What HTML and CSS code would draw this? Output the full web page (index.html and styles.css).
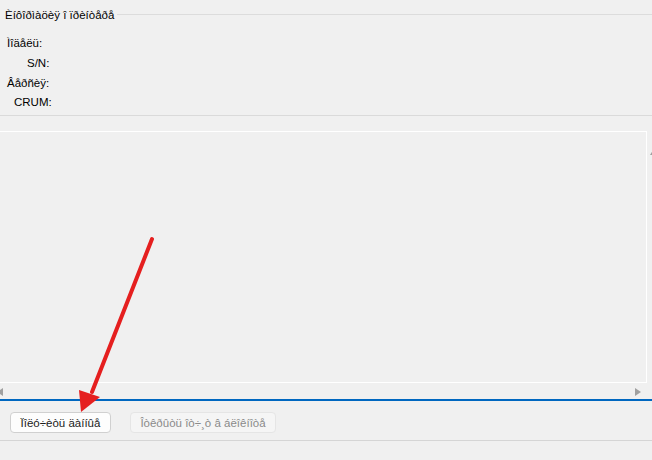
FILE: index.html
```html
<!DOCTYPE html>
<html lang="en">
<head>
    <meta charset="UTF-8">
    <meta name="viewport" content="width=device-width, initial-scale=1.0">
    <title>Printer Info</title>
    <link rel="stylesheet" href="styles.css">
</head>
<body>
    <div class="window">
        <div class="group-title">
            <span>Èíôîðìàöèÿ î ïðèíòåðå</span>
            <div class="group-line"></div>
        </div>
        <div class="info">
            <div class="info-row model">Ìîäåëü:</div>
            <div class="info-row sn">S/N:</div>
            <div class="info-row version">Âåðñèÿ:</div>
            <div class="info-row crum">CRUM:</div>
        </div>
        <div class="separator"></div>
        <div class="log">
            <div class="log-body"></div>
            <div class="vscroll"><span class="arrow-up"></span></div>
            <div class="hscroll">
                <span class="arrow-left"></span>
                <span class="arrow-right"></span>
            </div>
        </div>
        <div class="accent-line"></div>
        <div class="actions">
            <button class="btn btn-get">Ïîëó÷èòü äàííûå</button>
            <button class="btn btn-open" disabled>Îòêðûòü îò÷¸ò â áëîêíîòå</button>
        </div>
        <div class="bottom-line"></div>
    </div>
    <svg class="pointer" width="652" height="460" viewBox="0 0 652 460">
        <line x1="152" y1="239" x2="92" y2="392" stroke="#e51f1f" stroke-width="4" stroke-linecap="round"/>
        <polygon points="81,412 79,390 100,397" fill="#e51f1f"/>
    </svg>
</body>
</html>
```

FILE: styles.css
```css
body {
    margin: 0;
    background-color: #f0f0f0;
    font-family: "Liberation Sans", Arial, sans-serif;
    font-size: 11.5px;
    color: #000;
    overflow: hidden;
}
.window {
    width: 652px;
    height: 460px;
    overflow: hidden;
}
.group-title {
    display: flex;
    align-items: center;
    height: 16px;
    padding: 7px 0 0 5px;
}
.group-line {
    flex: 1;
    height: 1px;
    margin-left: 3px;
    margin-top: -2px;
    background-color: #dcdcdc;
}
.info {
    padding-top: 10px;
}
.info-row {
    height: 20px;
    line-height: 20px;
}
.model { padding-left: 7px; }
.sn { padding-left: 27px; }
.version { padding-left: 7px; }
.crum { padding-left: 14px; height: 19px; line-height: 19px; }
.separator {
    height: 1px;
    margin-top: 3px;
    background-color: #dadada;
}
.log {
    display: grid;
    grid-template-columns: 647px 5px;
    grid-template-rows: 252px 16px;
    margin-top: 15px;
}
.log-body {
    grid-column: 1;
    grid-row: 1;
    border-top: 1px solid #fff;
    border-right: 1px solid #fff;
    border-bottom: 1px solid #fff;
}
.vscroll {
    grid-column: 2;
    grid-row: 1 / 3;
    position: relative;
}
.arrow-up {
    position: absolute;
    left: 3px;
    top: 19px;
    border-left: 3px solid transparent;
    border-right: 3px solid transparent;
    border-bottom: 5px solid #a0a0a0;
}
.hscroll {
    grid-column: 1;
    grid-row: 2;
    position: relative;
}
.arrow-left {
    position: absolute;
    left: -3px;
    top: 5px;
    border-top: 4px solid transparent;
    border-bottom: 4px solid transparent;
    border-right: 6px solid #a0a0a0;
}
.arrow-right {
    position: absolute;
    left: 635px;
    top: 5px;
    border-top: 4px solid transparent;
    border-bottom: 4px solid transparent;
    border-left: 6px solid #a0a0a0;
}
.accent-line {
    height: 2px;
    background-color: #0067c0;
}
.actions {
    display: flex;
    gap: 19px;
    padding: 11px 0 0 10px;
    height: 21px;
}
.btn {
    font-family: "Liberation Sans", Arial, sans-serif;
    font-size: 11.5px;
    height: 21px;
    padding: 0;
    background-color: #fdfdfd;
    border: 1px solid #d0d0d0;
    border-radius: 4px;
    color: #1a1a1a;
}
.btn-get { width: 101px; }
.btn-open { width: 146px; }
.btn:disabled {
    background-color: #f5f5f5;
    border-color: #e5e5e5;
    color: #8a8a8a;
}
.bottom-line {
    height: 1px;
    margin-top: 7px;
    background-color: #d5d5d5;
}
.pointer {
    position: absolute;
    left: 0;
    top: 0;
    pointer-events: none;
}
```
